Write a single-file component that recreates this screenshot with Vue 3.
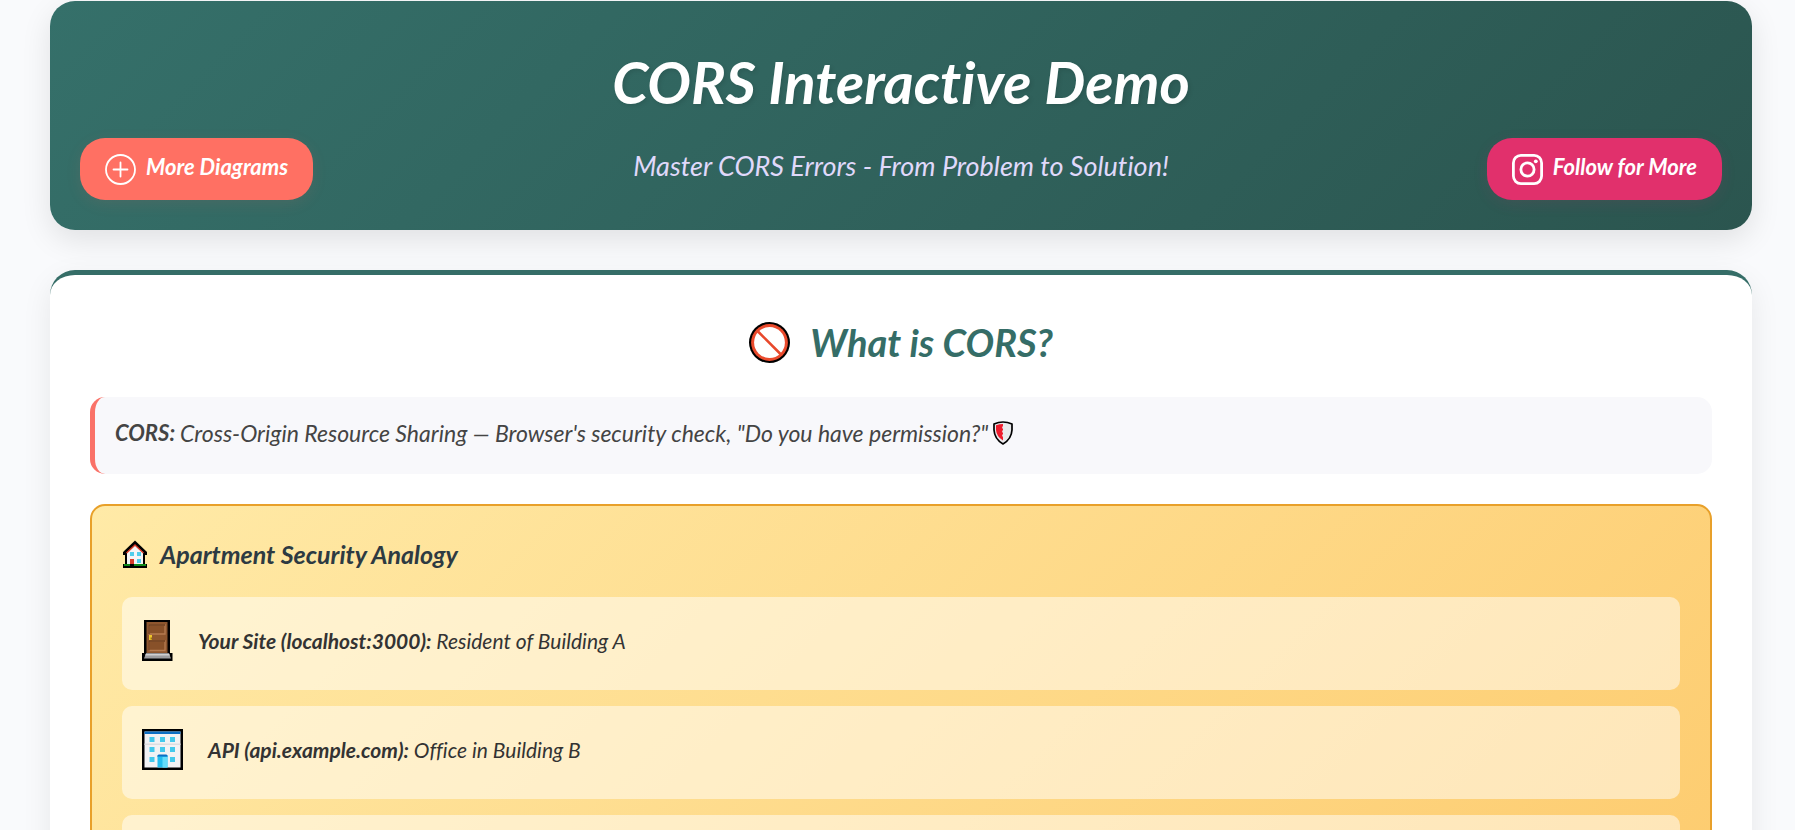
<script setup>
const residents = [
  { icon: 'door', name: 'Your Site (localhost:3000):', role: 'Resident of Building A' },
  { icon: 'office', name: 'API (api.example.com):', role: 'Office in Building B' },
]
</script>

<template>
  <div class="page">
    <header class="hero">
      <h1>CORS Interactive Demo</h1>
      <a class="pill pill-more" href="#diagrams">
        <svg width="31" height="31" viewBox="0 0 31 31" fill="none" stroke="#fff" stroke-width="1.8" stroke-linecap="round" aria-hidden="true">
          <circle cx="15.5" cy="15.5" r="14.5" />
          <path d="M15.5 8.5v14M8.5 15.5h14" />
        </svg>
        <span>More Diagrams</span>
      </a>
      <p class="subtitle">Master CORS Errors - From Problem to Solution!</p>
      <a class="pill pill-follow" href="#follow">
        <svg width="31" height="31" viewBox="0 0 31 31" fill="none" stroke="#fff" stroke-width="2.8" aria-hidden="true">
          <rect x="1.4" y="1.4" width="28.2" height="28.2" rx="7.5" />
          <circle cx="15.5" cy="15.5" r="6.6" />
          <circle cx="23.8" cy="7.3" r="1.9" fill="#fff" stroke="none" />
        </svg>
        <span>Follow for More</span>
      </a>
    </header>

    <main class="card">
      <h2>
        <svg width="41" height="41" viewBox="0 0 41 41" aria-hidden="true">
          <circle cx="20.5" cy="20.5" r="20.5" fill="#000" />
          <circle cx="20.5" cy="20.5" r="18.4" fill="#ea4a2c" />
          <circle cx="20.5" cy="20.5" r="15.4" fill="#fff" />
          <path d="M9 9.500L31.500 32" stroke="#e8482b" stroke-width="2.6" />
        </svg>
        <span>What is CORS?</span>
      </h2>

      <p class="info">
        <strong>CORS:</strong>
        <span>Cross-Origin Resource Sharing — Browser's security check, "Do you have permission?"</span>
        <svg width="20" height="24" viewBox="0 0 20 24" aria-hidden="true">
          <path d="M1 3Q10-1 19 3V9Q18.500 18 10 23Q1.500 18 1 9Z" fill="#e9e9eb" stroke="#000" stroke-width="1.7" stroke-linejoin="round" />
          <path d="M3 4.300Q6.500 3 10 3V5.500h-.8v2H10v2h-.8v2H10v2h-.8v2H10V19.600Q3.500 15.500 3 9Z" fill="#ee1c2c" />
        </svg>
      </p>

      <section class="analogy">
        <h3>
          <svg width="26" height="28" viewBox="0 0 26 28" aria-hidden="true">
            <path d="M4 12L13 3.500L22 12V25H4Z" fill="#f4f4f6" stroke="#000" stroke-width="2" />
            <path d="M4.500 13L13 5L21.500 13" fill="none" stroke="#d83b2a" stroke-width="1.500" />
            <path d="M2 12.500L13 2L24 12.500V14H22" fill="none" stroke="#000" stroke-width="2" />
            <path d="M2 12V14H4" fill="none" stroke="#000" stroke-width="2" />
            <path d="M8 12h4v4H8zM15 12h4v4h-4zM15 19h4v4h-4z" fill="#50cdec" />
            <path d="M8 19h4v6H8z" fill="#d83b2a" />
            <path d="M1 24h24v4H1z" fill="#000" />
            <path d="M2 24h6v2H2zM12 24h12v2H12z" fill="#10891a" />
          </svg>
          <span>Apartment Security Analogy</span>
        </h3>

        <ul>
          <li v-for="item in residents" :key="item.icon">
            <svg v-if="item.icon === 'door'" width="31" height="41" viewBox="0 0 31 41" aria-hidden="true">
              <path d="M2 0H28V33H30.500V41H0V33H2Z" fill="#000" />
              <path d="M4.500 2H25.500V33H4.500Z" fill="#8e562e" />
              <path d="M7 5H23V14H7ZM7 21H23V30.500H7Z" fill="#885129" stroke="#b57b50" stroke-width="1.300" />
              <path d="M7 14V5H23M7 30.500V21H23" fill="none" stroke="#6b3c1c" stroke-width="1.300" />
              <path d="M7 15h3v5H7z" fill="#f0c52c" />
              <path d="M8.500 17.500h1.500v2H8.500z" fill="#9a7410" />
              <path d="M4 33.500H27L29 38.500H2Z" fill="#9d9d9f" />
              <path d="M4 33.500H27L28 35.500H3Z" fill="#cfcfd1" />
            </svg>
            <svg v-else width="41" height="41" viewBox="0 0 41 41" aria-hidden="true">
              <path d="M0 0H41V41H0Z" fill="#000" />
              <path d="M2.500 2.500H38.500V38.500H2.500Z" fill="#f2f2f4" />
              <path d="M2.500 2.500H38.500V5H2.500Z" fill="#0c6fc4" />
              <path d="M2.500 14.500H38.500V16H2.500Z" fill="#dddde0" />
              <path d="M7.500 8h5v5h-5zM18 8h5v5h-5zM28 8h5v5h-5zM7.500 18h5v5h-5zM18 18h5v5h-5zM28 18h5v5h-5zM7.500 28h5v5h-5zM28 28h5v5h-5z" fill="#43c9ec" />
              <path d="M15.500 26H25.500V38.500H15.500Z" fill="#24bdee" />
              <path d="M20.500 28h5v10.500h-5z" fill="#65dcfa" />
              <path d="M16.500 25.500h8l1.500 2H15Z" fill="#0c6fc4" />
            </svg>
            <p><strong>{{ item.name }}</strong> {{ item.role }}</p>
          </li>
          <li></li>
        </ul>
      </section>
    </main>
  </div>
</template>

<style>
body {
  margin: 0;
}
</style>

<style scoped>
.page {
  box-sizing: border-box;
  height: 100vh;
  overflow: hidden;
  padding: 1px 43px 0 50px;
  background: #f9fafc;
  color: #333;
  font-family: "Lato", "Open Sans", sans-serif;
  font-style: italic;
  font-variant-ligatures: none;
}

h1,
h2,
h3,
p,
ul {
  margin: 0;
}

svg {
  flex: none;
}

.hero {
  display: grid;
  grid-template-columns: 1fr auto 1fr;
  align-items: center;
  row-gap: 10px;
  padding: 35px 30px 30px;
  border-radius: 25px;
  background: linear-gradient(135deg, #35706a, #2b554f);
  box-shadow: 0 10px 30px rgba(0, 0, 0, 0.1);
}

h1 {
  grid-column: 1 / -1;
  color: #fff;
  font-size: 58px;
  line-height: 92px;
  text-align: center;
  text-shadow: 2px 2px 4px rgba(0, 0, 0, 0.1);
}

.subtitle {
  padding-bottom: 6px;
  color: #e0d9fb;
  font-size: 27px;
  line-height: 36px;
}

.pill {
  display: flex;
  align-items: center;
  gap: 10px;
  height: 62px;
  padding: 0 25px;
  border-radius: 25px;
  color: #fff;
  font-size: 22px;
  font-weight: 700;
  line-height: 26px;
  text-decoration: none;
  white-space: nowrap;
}

.pill span {
  padding-bottom: 4px;
}

.pill-more {
  justify-self: start;
  background: #ff7063;
  box-shadow: 0 4px 15px rgba(255, 112, 99, 0.1);
}

.pill-follow {
  justify-self: end;
  background: #e1306c;
  box-shadow: 0 4px 15px rgba(225, 48, 108, 0.1);
}

.card {
  margin-top: 40px;
  padding: 40px;
  border-top: 5px solid #356d67;
  border-radius: 25px;
  background: #fff;
  box-shadow: 0 10px 30px rgba(0, 0, 0, 0.08);
}

h2 {
  display: flex;
  align-items: center;
  justify-content: center;
  gap: 20px;
  margin-bottom: 28px;
  color: #356d67;
  font-size: 38px;
  line-height: 54px;
}

.info {
  display: flex;
  align-items: center;
  gap: 5px;
  margin-bottom: 30px;
  padding: 18px 20px 23px;
  border-left: 5px solid #fa7268;
  border-radius: 15px;
  background: #f8f8fb;
  color: #444;
  font-size: 23px;
  line-height: 36px;
}

.info strong {
  font-size: 22px;
}

.analogy {
  padding: 30px;
  border: 2px solid #e8a02a;
  border-radius: 15px;
  background: linear-gradient(135deg, #ffeaa7, #fdcb6e);
}

h3 {
  display: flex;
  align-items: center;
  gap: 12px;
  margin-bottom: 25px;
  color: #2d3a42;
  font-size: 25px;
  line-height: 36px;
}

ul {
  display: grid;
  gap: 16px;
  padding: 0;
  list-style: none;
}

li {
  display: flex;
  align-items: center;
  gap: 25px;
  min-height: 41px;
  padding: 23px 20px 29px;
  border-radius: 10px;
  background: rgba(255, 255, 255, 0.5);
  font-size: 21px;
  line-height: 30px;
}
</style>
